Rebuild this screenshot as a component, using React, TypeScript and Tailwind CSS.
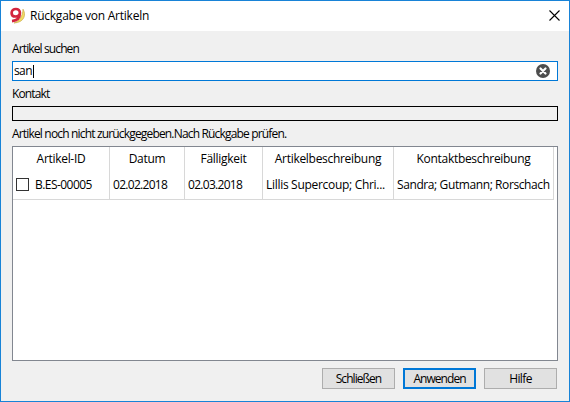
import type { ReactNode } from 'react';

function TitleBar() {
  return (
    <header className="flex h-[30px] shrink-0 items-center bg-white pl-2 pr-[9px]">
      <svg width="17" height="18" viewBox="0 0 17 18" className="shrink-0" fill="none">
        <path d="M14 2.200C17.400 7.500 15.500 15.500 5 16c5-1.800 8.800-6.400 9-13.800Z" fill="#f3dc62" stroke="#c9a94a" strokeWidth=".7" />
        <path d="M10.900 5.800C10.900 3.200 9.200 2 6.900 2S2.600 3.600 2.600 5.900s1.600 3.600 3.900 3.600 4.400-1.500 4.400-3.700c0 4.700-3 7.900-7.900 8.400" stroke="#d3243d" strokeWidth="2.700" />
      </svg>
      <h1 className="ml-[4px] whitespace-nowrap text-[12px] leading-4 tracking-[-0.24px]">Rückgabe von Artikeln</h1>
      <svg width="11" height="11" viewBox="0 0 11 11" className="relative -top-px ml-auto shrink-0" stroke="#000" strokeWidth="1.100">
        <path d="M.5.5l10 10M10.500.500l-10 10" />
      </svg>
    </header>
  );
}

function Cell({ children, className = '' }: { children?: ReactNode; className?: string }) {
  return <div className={`flex items-center overflow-hidden whitespace-nowrap border-r border-[#d8d8d8] ${className}`}>{children}</div>;
}

const columns = 'grid grid-cols-[97px_75px_78px_131px_160px]';

export default function App() {
  return (
    <main className="flex h-[402px] w-[570px] flex-col overflow-hidden border border-[#1883d7] bg-[#f0f0f0] font-['Open_Sans','Noto_Sans',sans-serif] text-[12px] leading-4 text-black">
      <TitleBar />
      <section className="flex flex-1 flex-col px-[11px] pt-[10px]">
        <label className="h-5 whitespace-nowrap tracking-[-0.88px]">Artikel suchen</label>
        <div className="flex h-5 shrink-0 items-center border border-[#0078d7] bg-white pl-px pr-[7px]">
          <span className="tracking-[-0.6px]">san</span>
          <i className="ml-px h-[13px] w-px bg-black" />
          <svg width="14" height="14" viewBox="0 0 14 14" className="ml-auto">
            <circle cx="7" cy="7" r="7" fill="#4d4d4d" />
            <path d="m4.500 4.500 5 5m0-5-5 5" stroke="#fff" strokeWidth="2.200" strokeLinecap="round" />
          </svg>
        </div>
        <label className="mt-[5px] h-5 whitespace-nowrap tracking-[-0.88px]">Kontakt</label>
        <div className="h-[15px] shrink-0 border border-black" />
        <p className="mt-[5px] h-5 whitespace-nowrap tracking-[-0.83px]">Artikel noch nicht zurückgegeben.Nach Rückgabe prüfen.</p>
        <div className="h-[215px] shrink-0 border border-[#828790] bg-white">
          <div className={`${columns} h-[23px] tracking-[-0.3px]`}>
            <Cell className="justify-center">Artikel-ID</Cell>
            <Cell className="justify-center">Datum</Cell>
            <Cell className="justify-center">Fälligkeit</Cell>
            <Cell className="justify-center">Artikelbeschreibung</Cell>
            <Cell className="justify-center">Kontaktbeschreibung</Cell>
          </div>
          <div className={`${columns} h-[30px] w-[541px] border-b border-[#d8d8d8]`}>
            <Cell className="pl-[3px] tracking-[-0.55px]">
              <span className="size-[13px] shrink-0 border border-[#333]" />
              <span className="ml-1.5">B.ES-00005</span>
            </Cell>
            <Cell className="pl-[3px] tracking-[-0.7px]">02.02.2018</Cell>
            <Cell className="pl-[3px] tracking-[-0.7px]">02.03.2018</Cell>
            <Cell className="pl-[3px] tracking-[-0.3px]">Lillis Supercoup; Chri...</Cell>
            <Cell className="pl-[3px] tracking-[-0.4px]">Sandra; Gutmann; Rorschach</Cell>
          </div>
        </div>
        <footer className="mt-[7px] flex justify-end gap-2 pr-px tracking-[-0.95px]">
          <button className="h-[21px] w-[73px] border border-[#adadad] bg-[#e1e1e1]">Schließen</button>
          <button className="h-[21px] w-[73px] border-2 border-[#0078d7] bg-[#e1e1e1]">Anwenden</button>
          <button className="h-[21px] w-[73px] border border-[#adadad] bg-[#e1e1e1] tracking-[-0.6px]">Hilfe</button>
        </footer>
      </section>
    </main>
  );
}
